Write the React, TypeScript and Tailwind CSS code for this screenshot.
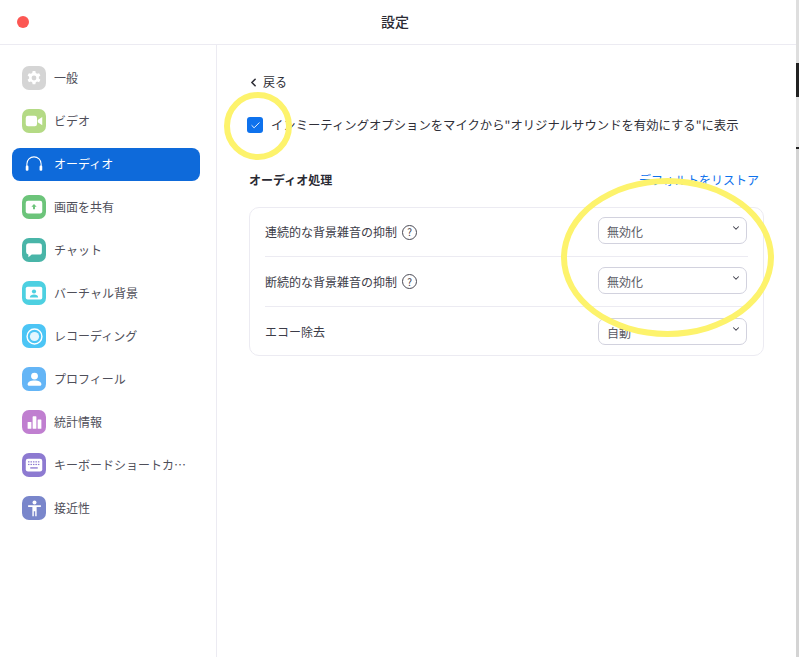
import React from 'react';
import { ChevronDown, ChevronLeft, Check } from 'lucide-react';

const jp = { fontFamily: '"Noto Sans CJK JP", sans-serif' };

const Gear = () => (
  <svg viewBox="0 0 24 24" className="h-[16px] w-[16px] fill-white">
    <path d="M10 1.5h4l.7 3 1.9 1.1 3-.9 2 3.500-2.300 2.100v2.400l2.300 2.100-2 3.500-3-.9-1.900 1.100-.7 3h-4l-.7-3-1.900-1.100-3 .9-2-3.500 2.300-2.100v-2.400l-2.300-2.100 2-3.500 3 .9 1.900-1.100z" />
    <circle cx="12" cy="12" r="3.600" fill="#d5d5d5" />
  </svg>
);

const Video = () => (
  <svg viewBox="0 0 24 24" className="h-[18px] w-[18px] fill-white">
    <rect x="1" y="5" width="15" height="14" rx="3" />
    <path d="M17 10.500l6-4v11l-6-4z" />
  </svg>
);

const Headphones = () => (
  <svg viewBox="0 0 24 24" className="h-[18px] w-[18px]" fill="none" stroke="white" strokeWidth="1.400">
    <path d="M2.500 16v-4a9.500 9.500 0 0 1 19 0v4" />
    <rect x="1" y="14" width="3.600" height="7" rx="1.500" fill="white" stroke="none" />
    <rect x="19.400" y="14" width="3.600" height="7" rx="1.500" fill="white" stroke="none" />
  </svg>
);

const Share = () => (
  <svg viewBox="0 0 24 24" className="h-[18px] w-[18px]">
    <rect x="1" y="3.500" width="22" height="17" rx="3" fill="white" />
    <path d="M12 8l3.500 3.500h-2.200v3.500h-2.600v-3.500h-2.200z" fill="#6cc47a" />
  </svg>
);

const Chat = () => (
  <svg viewBox="0 0 24 24" className="h-[18px] w-[18px] fill-white">
    <path d="M5 3h14a3.500 3.500 0 0 1 3.500 3.500v8a3.500 3.500 0 0 1-3.500 3.500h-10l-4.500 3.500v-3.600a3.500 3.500 0 0 1-3-3.400v-8a3.500 3.500 0 0 1 3.500-3.500z" />
  </svg>
);

const Background = () => (
  <svg viewBox="0 0 24 24" className="h-[18px] w-[18px]">
    <rect x="1" y="3.500" width="22" height="17" rx="2.500" fill="white" />
    <circle cx="12" cy="10" r="2.800" fill="#4dd0e1" />
    <path d="M6.500 18c0-3 2.500-4 5.500-4s5.500 1 5.500 4z" fill="#4dd0e1" />
  </svg>
);

const Recording = () => (
  <svg viewBox="0 0 24 24" className="h-[17px] w-[17px]">
    <circle cx="12" cy="12" r="10.500" fill="none" stroke="white" strokeWidth="2" />
    <circle cx="12" cy="12" r="6.500" fill="#e4f6fe" />
  </svg>
);

const Profile = () => (
  <svg viewBox="0 0 24 24" className="h-[15px] w-[15px] fill-white">
    <circle cx="12" cy="6.500" r="5.500" />
    <path d="M1 20c0-4.500 4.500-6.500 11-6.500s11 2 11 6.500c0 1-1 2-2 2h-18c-1 0-2-1-2-2z" />
  </svg>
);

const Stats = () => (
  <svg viewBox="0 0 24 24" className="h-[15px] w-[15px] fill-white">
    <rect x="1" y="11" width="6" height="11" rx="1" />
    <rect x="9" y="2" width="6" height="20" rx="1" />
    <rect x="17" y="7" width="6" height="15" rx="1" />
  </svg>
);

const Keyboard = () => (
  <svg viewBox="0 0 24 24" className="h-[18px] w-[18px]">
    <rect x="1" y="3.500" width="22" height="17" rx="3" fill="white" />
    <g fill="#8d7ad1">
      <rect x="4" y="7" width="2" height="1.600" />
      <rect x="7.300" y="7" width="2" height="1.600" />
      <rect x="10.600" y="7" width="2" height="1.600" />
      <rect x="13.900" y="7" width="2" height="1.600" />
      <rect x="17.200" y="7" width="2" height="1.600" />
      <rect x="4" y="10.500" width="2" height="1.600" />
      <rect x="7.300" y="10.500" width="2" height="1.600" />
      <rect x="10.600" y="10.500" width="2" height="1.600" />
      <rect x="13.900" y="10.500" width="2" height="1.600" />
      <rect x="17.200" y="10.500" width="2" height="1.600" />
      <rect x="7" y="15" width="10" height="1.800" />
    </g>
  </svg>
);

const Accessibility = () => (
  <svg viewBox="0 0 24 24" className="h-[17px] w-[17px] fill-white">
    <circle cx="12" cy="3.500" r="2.800" />
    <path d="M3 7.500h18v2.400h-6v13.100h-2v-7h-2v7h-2v-13.100h-6z" />
  </svg>
);

const items = [
  { label: '一般', bg: 'bg-[#d5d5d5]', icon: <Gear /> },
  { label: 'ビデオ', bg: 'bg-[#b4da85]', icon: <Video /> },
  { label: 'オーディオ', bg: '', icon: <Headphones />, active: true },
  { label: '画面を共有', bg: 'bg-[#6cc47a]', icon: <Share /> },
  { label: 'チャット', bg: 'bg-[#49b5a8]', icon: <Chat /> },
  { label: 'バーチャル背景', bg: 'bg-[#4dd0e1]', icon: <Background /> },
  { label: 'レコーディング', bg: 'bg-[#4cc5f5]', icon: <Recording /> },
  { label: 'プロフィール', bg: 'bg-[#64b5f6]', icon: <Profile /> },
  { label: '統計情報', bg: 'bg-[#c07fd0]', icon: <Stats /> },
  { label: 'キーボードショートカ…', bg: 'bg-[#8d7ad1]', icon: <Keyboard /> },
  { label: '接近性', bg: 'bg-[#7986cb]', icon: <Accessibility /> },
];

const rows = [
  { label: '連続的な背景雑音の抑制', value: '無効化', help: true, h: 'h-[49px] border-b border-[#ecebf2]', top: 'mt-[-3px]' },
  { label: '断続的な背景雑音の抑制', value: '無効化', help: true, h: 'h-[50px] border-b border-[#ecebf2]', top: 'mt-[-3px]' },
  { label: 'エコー除去', value: '自動', help: false, h: 'h-[48px] pt-[2px]', top: 'mt-[-1px]' },
];

export default function App() {
  return (
    <div className="relative flex h-[657px] w-[799px] overflow-hidden bg-white text-[#3c3c48]" style={jp}>
      <div className="w-[796px] shrink-0 rounded-tr-[8px] bg-white">
        <header className="relative flex h-[45px] items-center justify-center border-b border-[#ecebf2] pb-[2px] pr-[6px]">
          <div className="absolute left-[17px] top-[16px] h-[12px] w-[12px] rounded-full bg-[#fc5753]" />
          <h1 className="text-[14px] font-medium text-[#2a2a33]">設定</h1>
        </header>

        <div className="flex h-[612px]">
          <nav className="flex w-[217px] shrink-0 flex-col gap-[10px] border-r border-[#ecebf2] pl-[12px] pr-[16px] pt-[17px]">
            {items.map((item) => (
              <div
                key={item.label}
                className={`flex h-[33px] w-[188px] items-center gap-[8px] rounded-[8px] pl-[10px] text-[12px] ${
                  item.active ? 'bg-[#0e6ada] text-white' : 'text-[#4f4f5a]'
                }`}
              >
                <span className={`-mt-[1px] flex h-[24px] w-[24px] shrink-0 items-center justify-center rounded-[7px] ${item.bg}`}>
                  {item.icon}
                </span>
                <span className="whitespace-nowrap pb-[2px]">{item.label}</span>
              </div>
            ))}
          </nav>

          <main className="flex-1 pl-[32px] pt-[28px]">
            <div className="-ml-[2px] flex h-[18px] items-center gap-[3px] text-[12px] text-[#2f2f38]">
              <ChevronLeft size={13} strokeWidth={3} />
              <span>戻る</span>
            </div>

            <div className="mt-[25px] flex h-[18px] items-center gap-[8px] text-[12.35px] text-[#2f2f38]">
              <span className="-ml-[2px] flex h-[16px] w-[16px] items-center justify-center rounded-[3px] bg-[#0e72ed]">
                <Check size={11} color="white" strokeWidth={2} />
              </span>
              <span className="whitespace-nowrap">インミーティングオプションをマイクから"オリジナルサウンドを有効にする"に表示</span>
            </div>

            <div className="mt-[37px] flex h-[18px] w-[515px] items-center justify-between text-[12px]">
              <span className="font-bold text-[#2a2a33]">オーディオ処理</span>
              <a className="pr-[5px] text-[#0e72ed]">デフォルトをリストア</a>
            </div>

            <div className="mt-[18px] w-[515px] rounded-[10px] border border-[#ecebf2] px-[15px]">
              {rows.map((row) => (
                <div key={row.label} className={`flex items-center justify-between ${row.h}`}>
                  <div className="flex items-center gap-[5px] text-[12px] text-[#3c3c48]">
                    <span>{row.label}</span>
                    {row.help && (
                      <span className="flex h-[15px] w-[15px] items-center justify-center rounded-full border border-[#4a4a55] text-[10px] leading-none">
                        ?
                      </span>
                    )}
                  </div>
                  <div className={`relative mr-[1px] flex h-[27px] w-[149px] items-center rounded-[7px] border-[1.5px] border-[#d2d2de] pl-[8px] pt-[3px] text-[12px] text-[#5a5a64] ${row.top}`}>
                    <span>{row.value}</span>
                    <ChevronDown size={10} strokeWidth={2.500} className="absolute right-[5px] top-[5px] text-[#3c3c48]" />
                  </div>
                </div>
              ))}
            </div>
          </main>
        </div>
      </div>

      {/* sliver of the desktop behind the window */}
      <div className="flex w-[3px] flex-col bg-[#d4d4d4]">
        <div className="h-[63px] bg-[#dedede]" />
        <div className="h-[34px] bg-[#222222]" />
        <div className="h-[50px] bg-[#e4e4e4]" />
        <div className="h-[2px] bg-[#222222]" />
        <div className="flex-1 bg-[#d4d4d4]" />
      </div>

      {/* yellow hand-drawn annotations over the window */}
      <div className="absolute left-[224px] top-[92px] h-[68px] w-[68px] rounded-full border-[6px] border-[#fdf36c]" />
      <div className="absolute left-[561px] top-[178px] h-[159px] w-[213px] rounded-[50%] border-[6px] border-[#fdf36c]" />
    </div>
  );
}
